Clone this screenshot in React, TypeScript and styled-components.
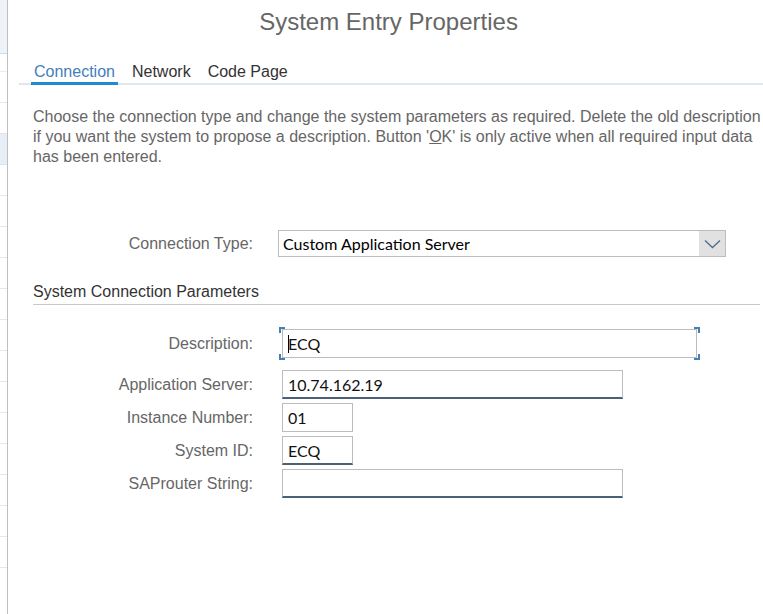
import React from 'react';
import styled, { createGlobalStyle } from 'styled-components';

const GlobalStyle = createGlobalStyle`
  html, body { margin: 0; padding: 0; background: #fff; }
  body { font-family: "Liberation Sans", Arial, sans-serif; }
  * { box-sizing: border-box; }
`;

const Window = styled.div`
  display: flex;
  width: 763px;
  height: 614px;
  overflow: hidden;
  background: #fff;
`;

const Strip = styled.div`
  width: 8px;
  flex: none;
  border-right: 1px solid #bfbfbf;
  display: flex;
  flex-direction: column;
`;

const StripCell = styled.div<{ $h: number; $bg?: string; $line: string }>`
  height: ${(p) => p.$h}px;
  flex: none;
  background: ${(p) => p.$bg || 'transparent'};
  border-bottom: 1px solid ${(p) => p.$line};
`;

const Main = styled.div`
  flex: 1;
  min-width: 0;
  display: flex;
  flex-direction: column;
`;

const Title = styled.div`
  margin-top: 8px;
  padding-left: 6px;
  font-size: 24px;
  line-height: 28px;
  color: #666;
  text-align: center;
`;

const TabBar = styled.div`
  margin: 25px 0 0 11px;
  padding-left: 12px;
  display: flex;
  gap: 11px;
  border-bottom: 2px solid #dde7f1;
`;

const Tab = styled.div<{ $active?: boolean }>`
  font-size: 16px;
  line-height: 20px;
  padding: 1px 3px 0;
  margin-bottom: -2px;
  border-bottom: 3px solid ${(p) => (p.$active ? '#1f8ad0' : 'transparent')};
  color: ${(p) => (p.$active ? '#3f80bd' : '#333')};
`;

const Intro = styled.p`
  margin: 22px 0 0;
  padding-left: 25px;
  font-size: 16px;
  line-height: 20px;
  color: #666;
`;

const Under = styled.span`
  text-decoration: underline;
`;

const Form = styled.div`
  padding-left: 25px;
  display: flex;
  flex-direction: column;
`;

const FieldRow = styled.div<{ $mt: number }>`
  display: grid;
  grid-template-columns: 220px 1fr;
  column-gap: 25px;
  align-items: center;
  margin-top: ${(p) => p.$mt}px;
`;

const Label = styled.div`
  text-align: right;
  font-size: 16px;
  line-height: 20px;
  padding-top: 1px;
  color: #666;
  white-space: nowrap;
`;

const Select = styled.div`
  width: 448px;
  height: 27px;
  border: 1px solid #bdbdbd;
  display: flex;
  align-items: center;
  font-family: Lato, "Liberation Sans", sans-serif;
  font-size: 16px;
  color: #000;
`;

const SelectValue = styled.div`
  flex: 1;
  padding-left: 4px;
  white-space: nowrap;
`;

const SelectButton = styled.div`
  width: 26px;
  align-self: stretch;
  background: #e1e1e1;
  display: flex;
  align-items: center;
  justify-content: center;
`;

const Section = styled.div`
  margin: 25px 3px 0 0;
  padding-bottom: 2px;
  border-bottom: 1px solid #c8c8c8;
  font-size: 16px;
  line-height: 20px;
  color: #333;
`;

const Input = styled.div<{ $w: number; $dark?: boolean }>`
  position: relative;
  margin-left: 4px;
  width: ${(p) => p.$w}px;
  height: 29px;
  border: 1px solid #bcbcbc;
  border-bottom: ${(p) => (p.$dark ? '2px solid #4a6076' : '1px solid #bcbcbc')};
  padding-left: 5px;
  display: flex;
  align-items: center;
  font-family: Lato, "Liberation Sans", sans-serif;
  font-size: 16px;
  color: #111;
  white-space: nowrap;
`;

const Corner = styled.span<{ $v: 'top' | 'bottom'; $h: 'left' | 'right' }>`
  position: absolute;
  width: 6px;
  height: 6px;
  ${(p) => p.$v}: -3px;
  ${(p) => p.$h}: -4px;
  border-${(p) => p.$v}: 2px solid #467fb3;
  border-${(p) => p.$h}: 2px solid #467fb3;
`;

const Caret = styled.span`
  display: inline-block;
  width: 1px;
  height: 18px;
  margin-right: -1px;
  background: #000;
`;

const Chevron = () => (
  <svg width="17" height="10" viewBox="0 0 17 10" fill="none">
    <path d="M1 1.5 L8.5 8.5 L16 1.5" stroke="#4c6d8f" strokeWidth="1.3" />
  </svg>
);

const stripCells: { h: number; bg?: string; line: string }[] = [
  { h: 54, bg: '#eef3f8', line: '#cfdcea' },
  { h: 18, line: '#ececec' },
  { h: 31, line: '#ebead8' },
  { h: 31, line: '#dbe5ef' },
  { h: 31, bg: '#e7eef6', line: '#dbe5ef' },
  ...Array.from({ length: 13 }, () => ({ h: 31, line: '#ebead8' })),
  { h: 40, line: 'transparent' },
];

export default function App() {
  return (
    <>
      <GlobalStyle />
      <Window>
        <Strip>
          {stripCells.map((c, i) => (
            <StripCell key={i} $h={c.h} $bg={c.bg} $line={c.line} />
          ))}
        </Strip>
        <Main>
          <Title>System Entry Properties</Title>
          <TabBar>
            <Tab $active>Connection</Tab>
            <Tab>Network</Tab>
            <Tab>Code Page</Tab>
          </TabBar>
          <Intro>
            Choose the connection type and change the system parameters as required. Delete the old description
            if you want the system to propose a description. Button '<Under>O</Under>K' is only active when all
            required input data has been entered.
          </Intro>
          <Form>
            <FieldRow $mt={63}>
              <Label>Connection Type:</Label>
              <Select>
                <SelectValue>Custom Application Server</SelectValue>
                <SelectButton>
                  <Chevron />
                </SelectButton>
              </Select>
            </FieldRow>
            <Section>System Connection Parameters</Section>
            <FieldRow $mt={24}>
              <Label>Description:</Label>
              <Input $w={415}>
                <Corner $v="top" $h="left" />
                <Corner $v="top" $h="right" />
                <Corner $v="bottom" $h="left" />
                <Corner $v="bottom" $h="right" />
                <Caret />
                ECQ
              </Input>
            </FieldRow>
            <FieldRow $mt={12}>
              <Label>Application Server:</Label>
              <Input $w={341} $dark>10.74.162.19</Input>
            </FieldRow>
            <FieldRow $mt={4}>
              <Label>Instance Number:</Label>
              <Input $w={71}>01</Input>
            </FieldRow>
            <FieldRow $mt={4}>
              <Label>System ID:</Label>
              <Input $w={71} $dark>ECQ</Input>
            </FieldRow>
            <FieldRow $mt={4}>
              <Label>SAProuter String:</Label>
              <Input $w={341} $dark></Input>
            </FieldRow>
          </Form>
        </Main>
      </Window>
    </>
  );
}
